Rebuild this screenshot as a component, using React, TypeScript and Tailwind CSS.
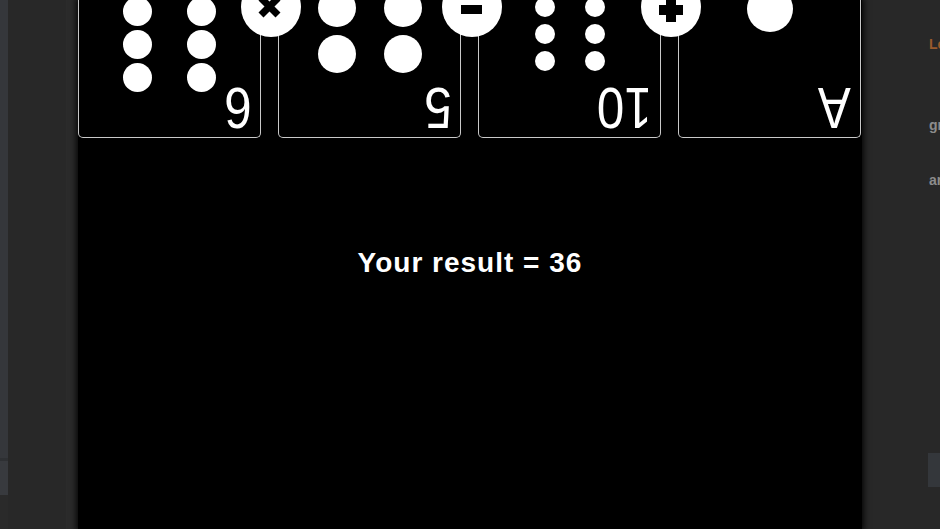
import React from 'react'

type Card = {
  label: string
  labelMr: string
  pips: React.ReactNode
}

function Pip({ size }: { size: string }) {
  return <div className={`${size} rounded-full bg-white`} />
}

const cards: Card[] = [
  {
    label: '6',
    labelMr: 'mr-[6px]',
    pips: (
      <div className="ml-[44px] mt-[-3px] grid w-fit grid-cols-2 gap-x-[35px] gap-y-[4px]">
        {Array.from({ length: 6 }).map((_, i) => (
          <Pip key={i} size="h-[29px] w-[29px]" />
        ))}
      </div>
    ),
  },
  {
    label: '5',
    labelMr: 'mr-[6px]',
    pips: (
      <div className="ml-[39px] mt-[-11px] grid w-fit grid-cols-2 gap-x-[28px] gap-y-[8px]">
        {Array.from({ length: 4 }).map((_, i) => (
          <Pip key={i} size="h-[38px] w-[38px]" />
        ))}
      </div>
    ),
  },
  {
    label: '10',
    labelMr: 'mr-[3px]',
    pips: (
      <div className="ml-[56px] mt-[-3px] grid w-fit grid-cols-2 gap-x-[30px] gap-y-[7px]">
        {Array.from({ length: 6 }).map((_, i) => (
          <Pip key={i} size="h-[20px] w-[20px]" />
        ))}
      </div>
    ),
  },
  {
    label: 'A',
    labelMr: 'mr-[6px]',
    pips: (
      <div className="ml-[68px] mt-[-14px]">
        <Pip size="h-[46px] w-[46px]" />
      </div>
    ),
  },
]

function OpCircle({ left, op }: { left: string; op: 'x' | '-' | '+' }) {
  return (
    <div className={`absolute top-[-23px] ${left} flex h-[60px] w-[60px] items-center justify-center rounded-full bg-white`}>
      <svg width="60" height="60" viewBox="0 0 60 60">
        {op === 'x' && (
          <g stroke="black" strokeWidth="7" strokeLinecap="butt">
            <line x1="20" y1="21" x2="37" y2="38" />
            <line x1="37" y1="21" x2="20" y2="38" />
          </g>
        )}
        {op === '-' && <rect x="19" y="28" width="21" height="9" fill="black" />}
        {op === '+' && (
          <g fill="black">
            <rect x="18" y="28" width="24" height="10" />
            <rect x="25" y="21" width="10" height="24" />
          </g>
        )}
      </svg>
    </div>
  )
}

export default function App() {
  return (
    <div className="flex h-[529px] w-[940px] overflow-hidden bg-[#282828] font-['Liberation_Sans',Arial,sans-serif]">
      {/* left gutter */}
      <div className="flex w-[78px] shrink-0">
        <div className="flex w-[8px] flex-col">
          <div className="h-[458px] bg-[#35373b]" />
          <div className="h-[3px] bg-[#2e3033]" />
          <div className="h-[34px] bg-[#383a3e]" />
          <div className="flex-1 bg-[#2a2a2a]" />
        </div>
        <div className="flex-1 bg-[#282828]" />
        <div className="w-[12px] bg-[#2b2b2b]" />
      </div>

      {/* game panel */}
      <div className="relative flex w-[784px] shrink-0 flex-col bg-black shadow-[0_0_6px_2px_rgba(0,0,0,0.85)]">
        <div className="flex h-[138px] gap-[17px]">
          {cards.map((c) => (
            <div
              key={c.label}
              className="flex w-[183px] flex-col rounded-b-[5px] border-x border-b border-[#c9c9c9]"
            >
              <div className="h-[79px] shrink-0">{c.pips}</div>
              <div
                className={`self-end ${c.labelMr} rotate-180 scale-x-[0.85] text-[58px] leading-[58px] text-white`}
              >
                {c.label}
              </div>
            </div>
          ))}
        </div>

        <OpCircle left="left-[163px]" op="x" />
        <OpCircle left="left-[364px]" op="-" />
        <OpCircle left="left-[563px]" op="+" />

        <div className="mt-[111px] text-center text-[28px] font-bold leading-[28px] tracking-[1px] text-white">
          Your result = 36
        </div>
      </div>

      {/* right side */}
      <div className="flex w-[78px] shrink-0 flex-col overflow-hidden whitespace-nowrap pl-[67px] text-[14px] font-bold">
        <div className="mt-[34px] text-[#9a5a2c]">Learn</div>
        <div className="mt-[60px] text-[#8c8c8c]">gr</div>
        <div className="mt-[34px] text-[#8c8c8c]">an</div>
        <div className="mt-[262px] ml-[-1px] h-[34px] bg-[#34373b]" />
      </div>
    </div>
  )
}
